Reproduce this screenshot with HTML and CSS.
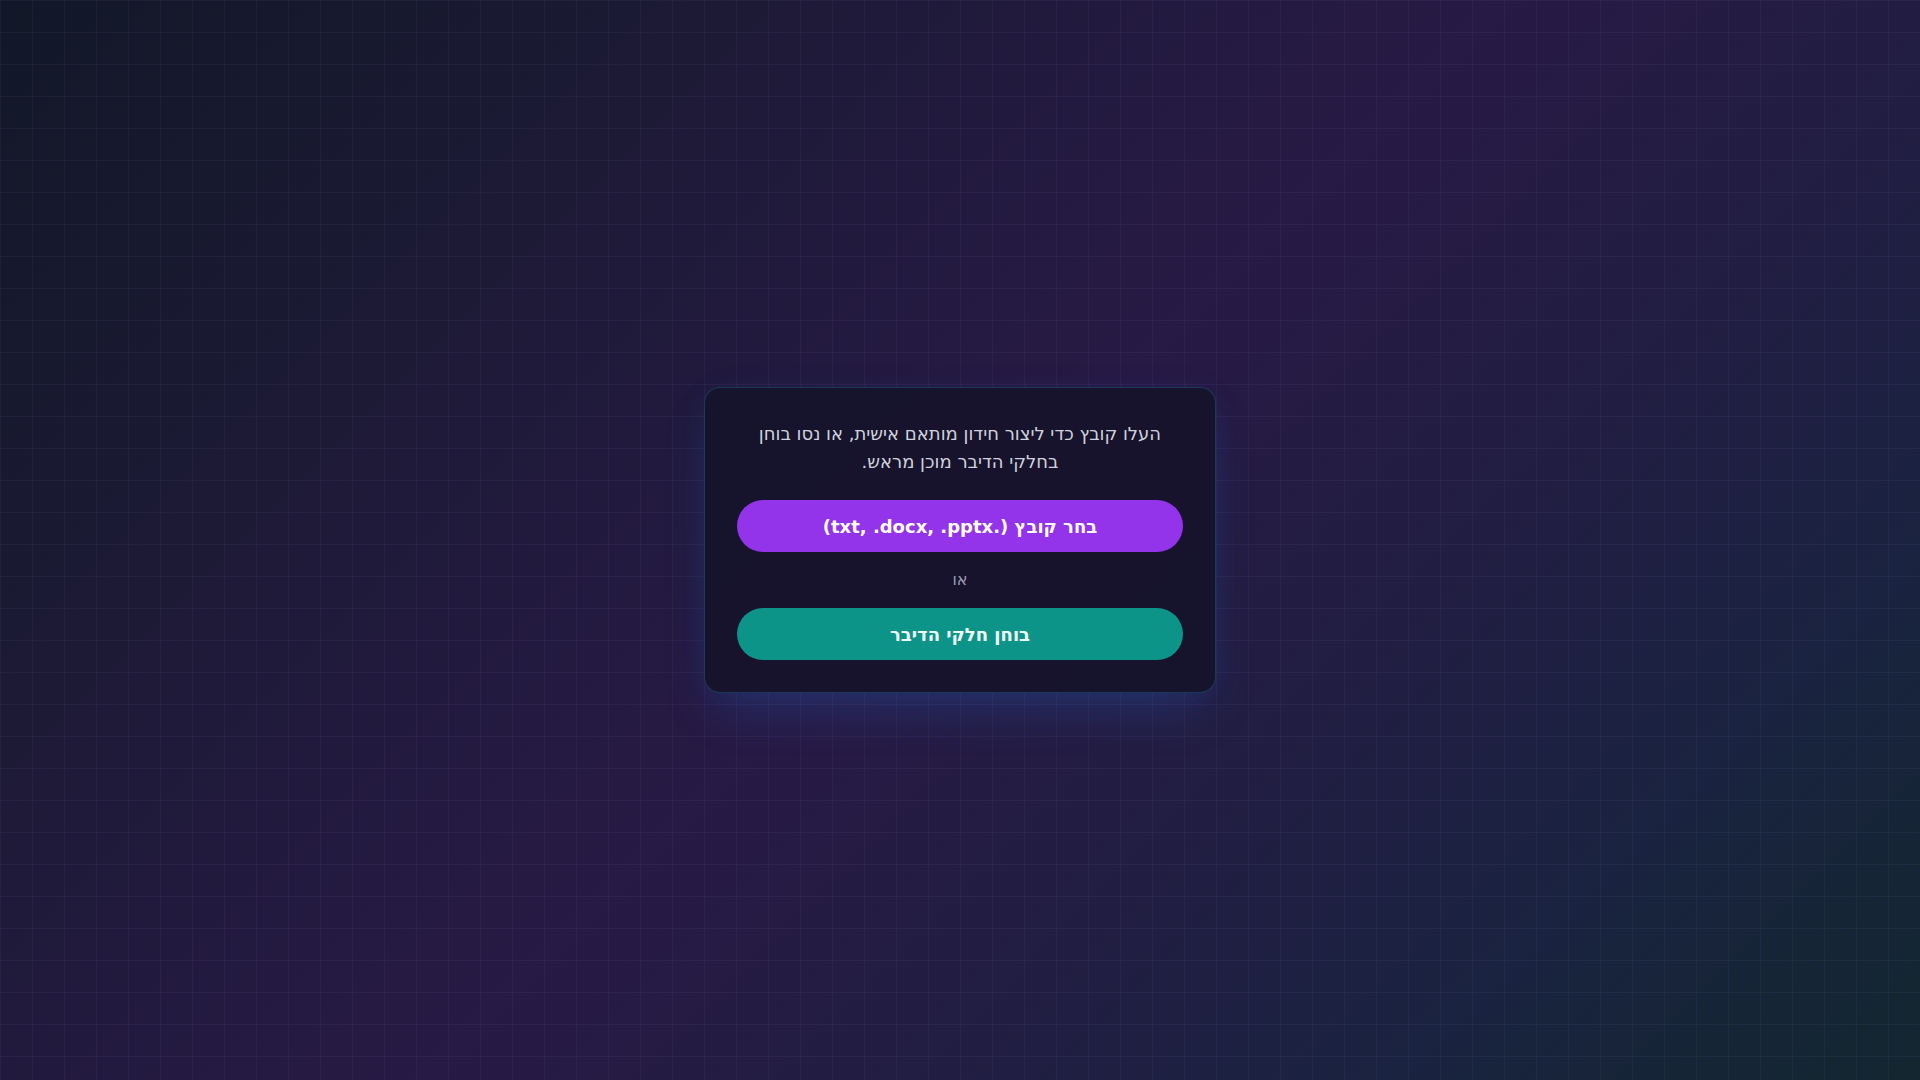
FILE: index.html
```html
<!DOCTYPE html>
<html lang="he" dir="rtl">
<head>
<meta charset="utf-8">
<title>חידון</title>
<link rel="stylesheet" href="styles.css">
</head>
<body>
<main class="page">
  <section class="card">
    <p class="intro">העלו קובץ כדי ליצור חידון מותאם אישית, או נסו בוחן בחלקי הדיבר מוכן מראש.</p>
    <button class="btn btn-upload" type="button">בחר קובץ (.txt, .docx, .pptx)</button>
    <div class="or">או</div>
    <button class="btn btn-quiz" type="button">בוחן חלקי הדיבר</button>
  </section>
</main>
</body>
</html>
```

FILE: styles.css
```css
* { box-sizing: border-box; }
html, body { margin: 0; padding: 0; height: 100%; }
body {
  font-family: "DejaVu Sans", "Noto Sans", sans-serif;
  background: linear-gradient(135deg, #111827 0%, #1d1a36 25%, #271a45 50%, #221d42 66%, #1a2340 82%, #13262f 100%);
  overflow: hidden;
}
.page {
  min-height: 100vh;
  display: flex;
  align-items: center;
  justify-content: center;
  background-image:
    linear-gradient(to right, rgba(148, 130, 220, 0.07) 1px, transparent 1px),
    linear-gradient(to bottom, rgba(148, 130, 220, 0.07) 1px, transparent 1px);
  background-size: 32px 32px;
  background-position: 0 0;
}
.card {
  width: 512px;
  padding: 32px;
  border-radius: 16px;
  background: rgba(22, 18, 42, 0.92);
  border: 1px solid rgba(40, 150, 190, 0.3);
  box-shadow: 0 0 30px rgba(40, 110, 210, 0.06), 0 24px 50px -12px rgba(40, 115, 225, 0.26);
  display: flex;
  flex-direction: column;
  align-items: stretch;
  text-align: center;
}
.intro {
  margin: 0 0 24px;
  font-size: 18px;
  line-height: 28px;
  color: #cfd2dd;
}
.btn {
  display: block;
  width: 100%;
  height: 52px;
  border: none;
  border-radius: 999px;
  font-family: "DejaVu Sans", "Noto Sans", sans-serif;
  font-weight: bold;
  font-size: 18px;
  color: #ffffff;
  cursor: pointer;
  direction: rtl;
}
.btn-upload { background: #9333ea; }
.btn-quiz { background: #0d9488; color: #f0fdfa; }
.or {
  margin: 16px 0;
  font-size: 16px;
  line-height: 24px;
  color: #9a9db0;
}
```
